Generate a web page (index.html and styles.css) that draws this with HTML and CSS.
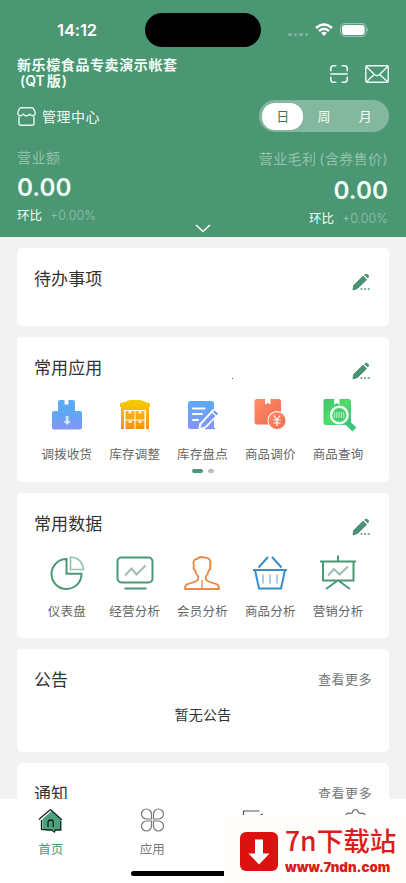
FILE: index.html
```html
<!DOCTYPE html>
<html lang="zh-CN">
<head>
<meta charset="utf-8">
<meta name="viewport" content="width=device-width, initial-scale=1">
<title>首页</title>
<link rel="stylesheet" href="styles.css">
</head>
<body>
<svg class="defs" aria-hidden="true">
  <defs>
    <linearGradient id="blue" x1="0" y1="0" x2="0" y2="1"><stop offset="0" stop-color="#5caaf5"/><stop offset="1" stop-color="#8594f6"/></linearGradient>
    <linearGradient id="gold" gradientUnits="userSpaceOnUse" x1="0" y1="2" x2="0" y2="34"><stop offset="0" stop-color="#f4cf00"/><stop offset="1" stop-color="#f78b1f"/></linearGradient>
    <linearGradient id="coral" x1="0" y1="0" x2="1" y2="1"><stop offset="0" stop-color="#ff8c66"/><stop offset="1" stop-color="#ef6b50"/></linearGradient>
    <linearGradient id="lime" x1="0" y1="0" x2="1" y2="1"><stop offset="0" stop-color="#3fc36c"/><stop offset=".5" stop-color="#51dc6b"/><stop offset="1" stop-color="#39bf73"/></linearGradient>
    <symbol id="edit" viewBox="0 0 18 18"><path d="M1 17 1.7 12.5 11 3.2 14.6 6.7 5.4 15.5Z" fill="#4b9275" stroke="#4b9275" stroke-linejoin="round"/><path d="M12.2 2 13.2 1Q14.3.2 15.5 1.3L16.6 2.3Q17.5 3.4 16.6 4.5L15.8 5.4Z" fill="#4b9275"/><path d="M8.6 16h1.800M12.2 16h1.800M15.800 16h1.800" stroke="#4b9275" stroke-width="1.700"/></symbol>
  </defs>
</svg>
<div class="screen">
  <header class="header">
    <div class="status">
      <span class="time">14:12</span>
      <span class="island"></span>
      <div class="signals">
        <i class="dots"><b></b><b></b><b></b><b></b></i>
        <svg width="18" height="14" viewBox="0 0 18 14" fill="none" stroke="#fff" stroke-width="2.5"><path d="M1 5Q9-2 17 5M4 8Q9 3.6 14 8"/><path d="M6.2 10Q9 7.6 11.8 10L9 13Z" fill="#fff" stroke="none"/></svg>
        <svg class="battery" width="29" height="14" viewBox="0 0 29 14"><rect x=".6" y=".6" width="25.6" height="12.8" rx="4.2" fill="none" stroke="#a5cbb9"/><rect x="2" y="2" width="22.6" height="10" rx="3" fill="#fff"/><path d="M27.2 5q1.6 2 0 4Z" fill="#c4ddd1"/></svg>
      </div>
    </div>
    <div class="account">
      <h1>新乐檬食品专卖演示帐套<br><span>(QT<i>版</i>)</span></h1>
      <div class="actions">
        <svg width="18" height="18" viewBox="0 0 18 18" fill="none" stroke="#ecfff5" stroke-width="1.5" stroke-linecap="round"><path d="M.8 5.8V3.5Q.8.8 3.5.8H5.8M12.2.8h2.3q2.7 0 2.7 2.7v2.3M.8 12.2v2.3q0 2.7 2.7 2.7h2.3M12.2 17.2h2.3q2.7 0 2.7-2.7v-2.3M.8 9h16.4"/></svg>
        <svg width="24" height="18" viewBox="0 0 24 18" fill="none" stroke="#ecfff5" stroke-width="1.4" stroke-linejoin="round"><rect x=".8" y=".8" width="22.4" height="16.4" rx="1.2"/><path d="m1.3 1.4 8.4 8.4q2.3 1.8 4.6 0l8.4-8.4M1.4 16.7l7.6-7M22.6 16.7l-7.6-7"/></svg>
      </div>
    </div>
    <div class="center-row">
      <div class="center-name">
        <svg width="19" height="19" viewBox="0 0 19 19" fill="none" stroke="#e3f7ec" stroke-width="1.4" stroke-linejoin="round"><path d="M4.1.8h10.8q1.2 0 1.8 1.2l1.4 3.2q.4 3.3-2.4 3.5-2 .1-3-1.700Q11.600 9 9.500 8.800 7.400 9 6.300 7q-1 1.800-3 1.700Q.5 8.500.9 5.200L2.300 2Q2.900.8 4.100.8ZM2 9.600v6.600q0 2 2 2h11q2 0 2-2V9.600"/></svg>
        <span>管理中心</span>
      </div>
      <div class="segments"><span class="on">日</span><span>周</span><span>月</span></div>
    </div>
    <div class="metrics">
      <section class="metric"><div class="label">营业额</div><div class="value">0.00</div><div class="change">环比<em>+0.00%</em></div></section>
      <section class="metric right"><div class="label">营业毛利<i>(</i>含券售价<i>)</i></div><div class="value">0.00</div><div class="change">环比<em>+0.00%</em></div></section>
    </div>
    <svg class="chevron" width="16" height="9" viewBox="0 0 16 9" fill="none" stroke="#fff" stroke-width="1.5"><path d="m1 1 7 6.500L15 1"/></svg>
  </header>
  <main class="content">
    <section class="card todo"><div class="card-head"><h2>待办事项</h2><svg class="edit"><use href="#edit"/></svg></div></section>
    <section class="card apps">
      <div class="card-head"><h2>常用应用</h2><svg class="edit"><use href="#edit"/></svg></div>
      <div class="grid">
        <div class="item"><svg viewBox="0 0 38 38"><path d="M10 4q0-2 2-2h4.500v4.500h4V2H25q2 0 2 2v10H10Z" fill="#5caaf5"/><rect x="4" y="13" width="30" height="18.500" rx="2" fill="url(#blue)"/><path d="M17.800 18h2.700v5H23l-3.900 4-3.800-4h2.500Z" fill="#d5e5ff"/></svg><span>调拨收货</span></div>
        <div class="item"><svg viewBox="0 0 38 38" fill="url(#gold)"><path d="M4 5.500Q11 3 14 2h10q4 1 10 3.500V9H4Z"/><path d="M5 9h28v22h-3V12H8v19H5Z"/><path d="M9.500 13h9v8.500h-9ZM19.500 13h9v8.500h-9ZM9.500 22.500h9V31h-9ZM19.500 22.500h9V31h-9Z"/><path d="M12.500 13h3v2.500h-3ZM22.500 13h3v2.500h-3ZM12.500 22.500h3V25h-3ZM22.500 22.500h3V25h-3Z" fill="#fff2bb"/></svg><span>库存调整</span></div>
        <div class="item"><svg viewBox="0 0 38 38"><rect x="5" y="3" width="26" height="28" rx="2.500" fill="url(#blue)"/><path d="M10 10.500H21.500M10 16h9M10 22h5" stroke="#fff" stroke-width="2" stroke-linecap="round"/><path d="m15 32 1.500-6.500L30 11l6 5-14 15.500Z" fill="#fff"/><path d="m17.500 30 1.200-4L29 15l3.500 3L22 28.500Z" fill="#7b9af5"/><path d="m30 14 1.500-1.500 3.500 3L33.500 17.200Z" fill="#6a98f3"/><path d="M22 30.500h2M26 30.500h2M30 30.500h2" stroke="#7b91ed" stroke-width="1.700"/></svg><span>库存盘点</span></div>
        <div class="item"><svg viewBox="0 0 38 38"><path d="M3.500 3.500q0-2.500 2.500-2.500h8v5.500l3-1.500 2.500 1.500V1h8Q30 1 30 3.500V26.500H6q-2.500 0-2.500-2.500Z" fill="url(#coral)"/><circle cx="26" cy="22.500" r="9.500" fill="#fff"/><circle cx="26" cy="22.500" r="8.600" fill="url(#coral)"/><path d="m22.800 17.500 3.200 4 3.200-4M26 21.500v6.500M22.500 22h7M22.500 25h7" fill="none" stroke="#fff" stroke-width="1.200"/></svg><span>商品调价</span></div>
        <div class="item"><svg viewBox="0 0 38 38"><path d="M4.500 3q0-2 2-2h8.700v5.500l2.600-1.500 2.700 1.500V1h9Q32 1 32 3.500V27H7q-2.500 0-2.500-2.500Z" fill="url(#lime)"/><path d="m27 23.500 8.500 8" stroke="#3bc777" stroke-width="5.500"/><circle cx="20.300" cy="17" r="8.300" fill="#48cf70" stroke="#effff3" stroke-width="2.500"/><path d="M15.500 14v6M17.800 14v6M20.100 14v6M22.400 14v6M24.700 14v6" stroke="#a9efba" stroke-width="1.200"/></svg><span>商品查询</span></div>
      </div>
      <div class="pager"><i></i><i></i></div>
    </section>
    <section class="card data">
      <div class="card-head"><h2>常用数据</h2><svg class="edit"><use href="#edit"/></svg></div>
      <div class="grid line">
        <div class="item"><svg viewBox="0 0 38 38" fill="none" stroke="#4b9877" stroke-width="2"><path d="M18.500 5v14.700h15A15 15 0 1 1 18.500 5Z"/><path d="M22.500 3v12.500h13Q34.300 4 22.500 3Z" stroke="#96c3af" stroke-width="1.700"/></svg><span>仪表盘</span></div>
        <div class="item"><svg viewBox="0 0 38 38" fill="none" stroke="#4b9877" stroke-width="2"><rect x="1.500" y="3.500" width="35" height="25" rx="4"/><path d="M8.500 34.500h22"/><path d="m9 21.500 6.500-7 5 6 9-9" stroke="#9dbfb0"/></svg><span>经营分析</span></div>
        <div class="item"><svg viewBox="0 0 38 38" fill="none" stroke="#ed8847" stroke-width="1.900" stroke-linejoin="round"><path d="M12.500 17Q9.500 14.500 11 12 9.500 7.500 12 5.500q2-.1 4-2 3-1 6 .2 2.500-.4 4.500 1.800 2 2.500.5 6.500 1.500 2.500-1.500 5-.4 3.500-2.700 5.500v3q1.700 2.200 10 4.400 3.200 1 3.200 5.100H2q0-4.100 3.200-5.100 8.300-2.200 10-4.400v-3q-2.300-2-2.700-5.500Z"/><path d="M19 26v8" stroke="#f0aa7f"/></svg><span>会员分析</span></div>
        <div class="item"><svg viewBox="0 0 38 38" fill="none" stroke="#378ec8" stroke-width="2"><path d="M2 16h34M4 16l4 18.500h22L34 16M7.500 13.500 17 3M30.500 13.500 21 3"/><path d="M12 20.500v9M19 20.500v9M26 20.500v9" stroke="#99bdeb" stroke-width="1.600"/></svg><span>商品分析</span></div>
        <div class="item"><svg viewBox="0 0 38 38" fill="none" stroke="#4b9877" stroke-width="2"><path d="M1 7.500h36M19 1.500v6M4 7.500v19h30.500v-19M18 27 7 35M20 27l11 8"/><path d="m9 21.500 6-6.500 5.500 5.500L29 12.500" stroke="#9dbfb0"/></svg><span>营销分析</span></div>
      </div>
    </section>
    <section class="card notice"><div class="card-head"><h2>公告</h2><span class="more">查看更多</span></div><p>暂无公告</p></section>
    <section class="card news"><div class="card-head"><h2>通知</h2><span class="more">查看更多</span></div></section>
  </main>
  <nav class="tabs">
    <div class="tab active"><svg viewBox="0 0 26 26" fill="none"><path d="M5 12 14.500 3.500 23.500 12v11H5Z" fill="#4ea17d"/><path d="m1.500 12.500 2-2 9.500-8 11.500 10.500M4 13v9.500l7 .5h3l3 2 .5-2h5.800v-9M10.500 20v-4.500q0-2.500 2.700-2.500 2.600 0 2.600 2.500V20" stroke="#10261c" stroke-width="1.300"/></svg><span>首页</span></div>
    <div class="tab"><svg viewBox="0 0 26 26" fill="none" stroke="#777" stroke-width="1.200"><path d="M12 12H7a5 5 0 1 1 5-5ZM14 12V7a5 5 0 1 1 5 5ZM12 14v5a5 5 0 1 1-5-5ZM14 14h5a5 5 0 1 1-5 5Z"/></svg><span>应用</span></div>
    <div class="tab"><svg viewBox="0 0 26 26" fill="none" stroke="#555" stroke-width="1.200"><path d="M19 4H3V22h20V9"/><path d="M17.500 8.500 22.500 6.500v2Z" fill="#555" stroke="none"/></svg></div>
    <div class="tab"><svg viewBox="0 0 26 26" fill="none" stroke="#666" stroke-width="1.200"><path d="M3 9Q5 5 7.500 6.500L10 5.500Q10.500 2.500 13 2.500T16 5.500l2.500 1Q21 5 23 9v12H3Z"/></svg></div>
    <div class="home-bar"></div>
  </nav>
  <aside class="badge">
    <svg width="38" height="39" viewBox="0 0 38 39"><rect width="38" height="39" rx="6" fill="#dc1110"/><path d="M15 7.500h8v14h6.500L19 32.500 8.500 21.500H15Z" fill="#fff"/></svg>
    <div class="badge-text"><strong>7n下载站</strong><b>www.7ndn.com</b></div>
  </aside>
  <i class="speck"></i>
</div>
</body>
</html>
```

FILE: styles.css
```css
* { box-sizing: border-box; }
body { margin: 0; font-family: Inter, "Noto Sans CJK SC", sans-serif; color: #333; }
h1, h2, p { margin: 0; font-weight: 400; }
i, em { font-style: normal; }
svg { display: block; flex: none; }
.defs { position: absolute; width: 0; height: 0; }
.screen { position: relative; width: 406px; height: 883px; overflow: hidden; background: #f2f2f2; }

.header { height: 237px; padding: 0 17px; background: #4b9673; color: #effff6; display: flex; flex-direction: column; }
.status { height: 57px; padding-top: 13px; display: grid; grid-template-columns: 128px 116px 1fr; color: #fff; }
.time { font-size: 16.5px; line-height: 35px; font-weight: 600; padding-left: 40px; letter-spacing: -.1px; }
.island { height: 34px; border-radius: 17px; background: #000; }
.signals { height: 34px; display: flex; align-items: center; padding-left: 27px; }
.dots { display: flex; gap: 2px; margin: 9px 7px 0 0; }
.dots b { width: 3.500px; height: 3.500px; border-radius: 50%; background: #7eb69b; }
.battery { margin-left: 7px; }
.account { height: 43px; display: flex; justify-content: space-between; }
h1 { font-size: 14px; line-height: 16px; letter-spacing: .6px; font-weight: 700; color: #f1fff8; }
h1 span { padding-left: 3px; letter-spacing: 0; font-weight: 600; }
h1 i { margin: 0 1px 0 2px; font-weight: 700; }
.actions { display: flex; gap: 17px; padding-top: 8px; }
.center-row { height: 32px; display: flex; justify-content: space-between; align-items: center; }
.center-name { display: flex; align-items: center; gap: 6px; font-size: 14px; letter-spacing: .5px; }
.segments { width: 130px; height: 32px; padding: 3px; border-radius: 16px; background: #83b79e; display: grid; grid-template-columns: repeat(3, 1fr); font-size: 13px; line-height: 27px; text-align: center; }
.segments .on { background: #fff; border-radius: 13px; color: #347b59; }
.metrics { padding-top: 17px; display: flex; justify-content: space-between; }
.metric.right { text-align: right; padding: 1px 1px 0 0; }
.label { height: 20px; font-size: 14px; line-height: 18px; letter-spacing: .5px; color: #91c2a9; white-space: nowrap; }
.metric.right .label { letter-spacing: .4px; }
.label i:first-child { margin-left: 3px; }
.value { height: 37px; font-size: 24.300px; line-height: 37px; font-weight: 600; color: #f0fff6; }
.metric.right .value { height: 39px; line-height: 40px; }
.change { font-size: 12.500px; line-height: 19px; }
.change em { margin-left: 8px; color: #91c2a9; font-weight: 300; letter-spacing: 0; }
.chevron { position: absolute; left: 195px; top: 224px; }

.content { padding: 11px 17px; display: flex; flex-direction: column; gap: 11px; }
.card { background: #fff; border-radius: 5px; padding: 0 17px; flex: none; }
.todo { height: 78px; }
.apps, .data { height: 145px; }
.notice { height: 103px; }
.news { height: 104px; }
.card-head { height: 61px; display: flex; justify-content: space-between; align-items: flex-start; }
h2 { font-size: 17px; line-height: 24px; margin-top: 19px; letter-spacing: .1px; }
.edit { width: 18px; height: 18px; margin: 24.500px 2px 0 0; }
.more { font-size: 13px; line-height: 20px; margin-top: 20px; color: #777; letter-spacing: .5px; }
.grid { display: grid; grid-template-columns: repeat(5, 67.800px); margin-left: -1px; }
.item { display: flex; flex-direction: column; align-items: center; gap: 10px; font-size: 12.500px; line-height: 18px; letter-spacing: .2px; color: #666; white-space: nowrap; }
.item svg { width: 38px; height: 38px; }
.line .item { gap: 10px; }
.pager { display: flex; justify-content: center; align-items: center; gap: 5px; margin-top: 5px; }
.pager i { width: 6px; height: 4px; border-radius: 2px; background: #bcbcbc; }
.pager i:first-child { width: 11px; background: #4b9673; }
.notice p { text-align: center; font-size: 14px; line-height: 20px; margin-top: -5px; letter-spacing: .2px; }

.tabs { position: absolute; left: 0; right: 0; top: 799px; height: 84px; background: #fff; display: grid; grid-template-columns: repeat(4, 1fr); }
.tab { display: flex; flex-direction: column; align-items: center; padding-top: 8px; gap: 8px; font-size: 12.500px; line-height: 18px; color: #777; }
.tab svg { width: 27px; height: 26px; }
.tab.active { color: #4b9673; }
.line .item svg { margin-top: 0; }
.line .item { line-height: 19px; }
.home-bar { position: absolute; left: 131px; top: 72px; width: 144px; height: 5px; border-radius: 3px; background: #000; }
.badge { position: absolute; left: 224px; top: 815px; width: 182px; height: 68px; background: #fffefc; color: #d91d1d; padding: 10px 0 0 16px; display: flex; gap: 7px; }
.badge svg { margin-top: 7px; }
.badge-text { display: flex; flex-direction: column; }
.badge strong { font: 500 26.500px/30px "Noto Sans CJK SC", sans-serif; white-space: nowrap; }
.badge b { font: 900 13.300px/18px Inter, sans-serif; margin-top: 3px; }
.speck { position: absolute; left: 232px; top: 378px; width: 1px; height: 1px; background: #555; }
```
